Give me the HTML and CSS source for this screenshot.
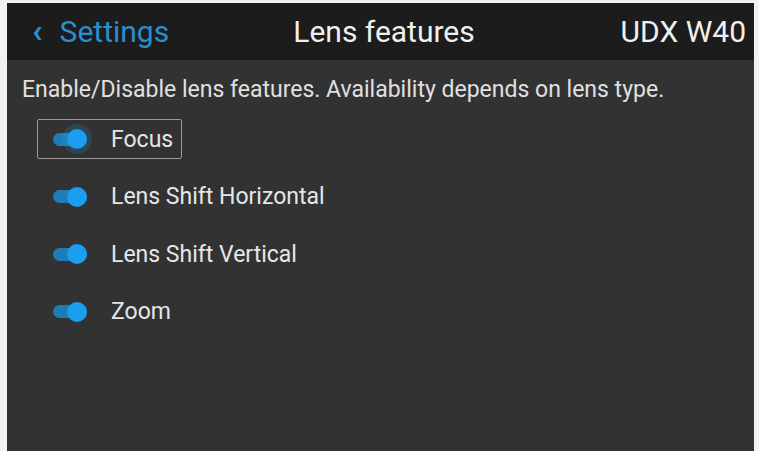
FILE: index.html
```html
<!DOCTYPE html>
<html lang="en">
<head>
    <meta charset="UTF-8">
    <meta name="viewport" content="width=device-width, initial-scale=1.0">
    <title>Lens features</title>
    <link rel="stylesheet" href="styles.css">
</head>
<body>
    <div class="screen">
        <div class="header">
            <div class="back"><span class="chevron">&lsaquo;</span> Settings</div>
            <div class="title">Lens features</div>
            <div class="model">UDX W40</div>
        </div>

        <div class="content">
            <p class="intro">Enable/Disable lens features. Availability depends on lens type.</p>

            <div class="feature-list">
                <div class="feature selected">
                    <span class="toggle on"></span>
                    <span class="label">Focus</span>
                </div>
                <div class="feature">
                    <span class="toggle on"></span>
                    <span class="label">Lens Shift Horizontal</span>
                </div>
                <div class="feature">
                    <span class="toggle on"></span>
                    <span class="label">Lens Shift Vertical</span>
                </div>
                <div class="feature">
                    <span class="toggle on"></span>
                    <span class="label">Zoom</span>
                </div>
            </div>
        </div>
    </div>
</body>
</html>
```

FILE: styles.css
```css
:root {
    --accent: #1a9ff0;
    --header: #1c1c1c;
    --panel: #323232;
    --text: #e6e6e6;
}

html, body {
    margin: 0;
    height: 100%;
}

body {
    background: #f2f2f2;
    font-family: Roboto, 'Liberation Sans', sans-serif;
    color: var(--text);
    padding: 3px 5px 0 7px;
    box-sizing: border-box;
}

.screen {
    background: var(--panel);
    height: 100%;
    display: flex;
    flex-direction: column;
}

/* top bar */
.header {
    height: 57px;
    background: var(--header);
    display: grid;
    grid-template-columns: 1fr auto 1fr;
    align-items: center;
    padding: 0 8px 0 25px;
    font-size: 30px;
}

.back {
    color: #2a8fcf;
    display: flex;
    align-items: center;
}

.chevron {
    font-size: 34px;
    line-height: 1;
    margin: -4px 17px 0 0;
    font-weight: bold;
}

.title {
    color: #f0f0f0;
    padding-right: 10px;
}

.model {
    justify-self: end;
    color: #f0f0f0;
}

.content {
    padding: 0 0 0 15px;
}

.intro {
    margin: 16px 0 0;
    font-size: 23px;
    color: #e0e0e0;
}

.feature-list {
    margin-top: 16px;
    display: flex;
    flex-direction: column;
    gap: 17.5px;
}

.feature {
    display: flex;
    align-items: center;
    height: 38px;
    margin-left: 15px;
    padding-left: 15px;
    width: fit-content;
    padding-right: 8px;
    border: 1px solid transparent;
    border-radius: 2px;
}

.feature.selected {
    border-color: #9a9a9a;
}

.label {
    font-size: 23px;
    color: #e6e6e6;
    margin-left: 24px;
}

/* switch */
.toggle {
    position: relative;
    width: 34px;
    height: 13px;
    border-radius: 7px;
    background: #1f7db5;
}

.toggle.on::after {
    content: "";
    position: absolute;
    right: 0;
    top: -3.5px;
    width: 20px;
    height: 20px;
    border-radius: 50%;
    background: var(--accent);
}

.feature.selected .toggle.on::after {
    box-shadow: 0 0 0 5px rgba(26, 159, 240, 0.18);
}
```
